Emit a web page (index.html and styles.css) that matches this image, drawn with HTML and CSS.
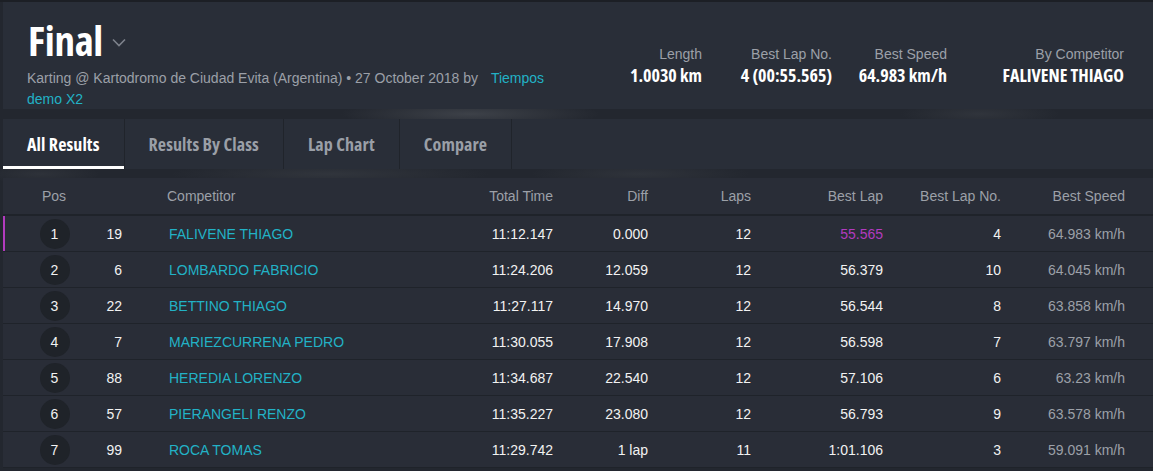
FILE: index.html
```html
<!DOCTYPE html>
<html lang="en">
<head>
<meta charset="utf-8">
<title>Final - Results</title>
<link rel="stylesheet" href="styles.css">
</head>
<body>
<div class="page">
  <header class="session">
    <div class="session-main">
      <h1 class="title">Final <svg class="chev" width="14" height="9" viewBox="0 0 14 9"><polyline points="1,1.5 7,7.5 13,1.5" fill="none" stroke="#7d828b" stroke-width="1.6"/></svg></h1>
      <p class="subtitle">Karting @ Kartodromo de Ciudad Evita (Argentina) • 27 October 2018 by <a class="org" href="#">Tiempos demo X2</a></p>
    </div>
    <div class="stats">
      <div class="stat s1"><div class="stat-label">Length</div><div class="stat-value">1.0030 km</div></div>
      <div class="stat s2"><div class="stat-label">Best Lap No.</div><div class="stat-value">4 (00:55.565)</div></div>
      <div class="stat s3"><div class="stat-label">Best Speed</div><div class="stat-value">64.983 km/h</div></div>
      <div class="stat s4"><div class="stat-label">By Competitor</div><div class="stat-value">FALIVENE THIAGO</div></div>
    </div>
  </header>

  <nav class="tabs">
    <a class="tab active" href="#">All Results</a>
    <a class="tab" href="#">Results By Class</a>
    <a class="tab" href="#">Lap Chart</a>
    <a class="tab" href="#">Compare</a>
  </nav>

  <div class="results">
    <div class="row head">
      <div class="center">Pos</div><div></div><div class="left">Competitor</div><div>Total Time</div><div>Diff</div><div>Laps</div><div>Best Lap</div><div>Best Lap No.</div><div>Best Speed</div>
    </div>
    <div class="row leader">
      <div class="center"><span class="pos">1</span></div><div>19</div><div class="left"><a class="name" href="#">FALIVENE THIAGO</a></div><div>11:12.147</div><div>0.000</div><div>12</div><div class="fastest">55.565</div><div>4</div><div class="speed">64.983 km/h</div>
    </div>
    <div class="row">
      <div class="center"><span class="pos">2</span></div><div>6</div><div class="left"><a class="name" href="#">LOMBARDO FABRICIO</a></div><div>11:24.206</div><div>12.059</div><div>12</div><div>56.379</div><div>10</div><div class="speed">64.045 km/h</div>
    </div>
    <div class="row">
      <div class="center"><span class="pos">3</span></div><div>22</div><div class="left"><a class="name" href="#">BETTINO THIAGO</a></div><div>11:27.117</div><div>14.970</div><div>12</div><div>56.544</div><div>8</div><div class="speed">63.858 km/h</div>
    </div>
    <div class="row">
      <div class="center"><span class="pos">4</span></div><div>7</div><div class="left"><a class="name" href="#">MARIEZCURRENA PEDRO</a></div><div>11:30.055</div><div>17.908</div><div>12</div><div>56.598</div><div>7</div><div class="speed">63.797 km/h</div>
    </div>
    <div class="row">
      <div class="center"><span class="pos">5</span></div><div>88</div><div class="left"><a class="name" href="#">HEREDIA LORENZO</a></div><div>11:34.687</div><div>22.540</div><div>12</div><div>57.106</div><div>6</div><div class="speed">63.23 km/h</div>
    </div>
    <div class="row">
      <div class="center"><span class="pos">6</span></div><div>57</div><div class="left"><a class="name" href="#">PIERANGELI RENZO</a></div><div>11:35.227</div><div>23.080</div><div>12</div><div>56.793</div><div>9</div><div class="speed">63.578 km/h</div>
    </div>
    <div class="row">
      <div class="center"><span class="pos">7</span></div><div>99</div><div class="left"><a class="name" href="#">ROCA TOMAS</a></div><div>11:29.742</div><div>1 lap</div><div>11</div><div>1:01.106</div><div>3</div><div class="speed">59.091 km/h</div>
    </div>
  </div>
</div>
</body>
</html>
```

FILE: styles.css
```css
* { box-sizing: border-box; }

html, body {
  margin: 0;
  padding: 0;
}

body {
  width: 1153px;
  height: 471px;
  overflow: hidden;
  background-color: #23272f;
  background-image:
    radial-gradient(ellipse 130px 14px at 470px 114px, rgba(110,114,120,0.35), transparent),
    radial-gradient(ellipse 80px 12px at 980px 114px, rgba(95,99,105,0.22), transparent),
    radial-gradient(ellipse 160px 12px at 330px 174px, rgba(90,94,100,0.25), transparent),
    radial-gradient(ellipse 60px 10px at 40px 174px, rgba(90,94,100,0.2), transparent),
    radial-gradient(ellipse 110px 12px at 640px 174px, rgba(90,94,100,0.22), transparent),
    linear-gradient(#1c1f25 0, #1c1f25 2px, transparent 2px);
  font-family: "Liberation Sans", Arial, sans-serif;
  color: #fff;
}

.page {
  padding: 2px 0 0 3px;
}

/* ---------- session header ---------- */
.session {
  height: 107px;
  background: #292e38;
  display: flex;
  justify-content: space-between;
  align-items: flex-start;
  padding: 17px 29px 0 24px;
}

.session-main {
  width: 530px;
}

.title {
  margin: 0;
  font-family: "Open Sans", "Liberation Sans Narrow", sans-serif;
  font-stretch: 75%;
  font-weight: 700;
  font-size: 41px;
  line-height: 42px;
  letter-spacing: -0.3px;
  display: flex;
  align-items: center;
  gap: 9px;
  padding-left: 1px;
}

.chev {
  display: block;
  margin-top: 4px;
}

.subtitle {
  margin: 7px 0 0;
  font-size: 14px;
  line-height: 21px;
  color: #9ca0a8;
}

.org {
  color: #22b2c6;
  text-decoration: none;
  margin-left: 9px;
}

.stats {
  display: flex;
  margin-top: 26px;
}

.stat {
  text-align: right;
}

.s1 { width: 100px; }
.s2 { width: 130px; }
.s3 { width: 115px; }
.s4 { width: 177px; }

.stat-label {
  font-size: 14px;
  line-height: 18px;
  color: #9ca0a8;
}

.stat-value {
  font-family: "Open Sans", "Liberation Sans Narrow", sans-serif;
  font-stretch: 75%;
  font-weight: 700;
  font-size: 18px;
  line-height: 25px;
  color: #fff;
}

/* ---------- tabs ---------- */
.tabs {
  margin-top: 10px;
  height: 50px;
  background: #292e38;
  display: flex;
}

.tab {
  display: flex;
  align-items: center;
  padding: 0 24px;
  height: 50px;
  border-right: 1px solid #20242b;
  font-family: "Open Sans", "Liberation Sans Narrow", sans-serif;
  font-stretch: 75%;
  font-weight: 700;
  font-size: 18px;
  letter-spacing: 0.1px;
  color: #9a9fa7;
  text-decoration: none;
}

.tab.active {
  color: #fff;
  box-shadow: inset 0 -3px 0 #ffffff;
}

/* ---------- results table ---------- */
.results {
  margin-top: 9px;
  width: 1150px;
  background: #292d37;
  font-size: 14px;
}

.row {
  display: grid;
  grid-template-columns: 102px 17px 358px 73px 95px 103px 132px 118px 124px;
  align-items: center;
  height: 36px;
  border-bottom: 1px solid #1f232a;
  color: #f2f2f2;
}

.row > div {
  text-align: right;
  white-space: nowrap;
}

.row.head {
  height: 38px;
  border-bottom: 2px solid #1f232a;
  color: #9ca0a8;
}

.row .center { text-align: center; }
.row .left { text-align: left; padding-left: 47px; }
.row.head .left { padding-left: 45px; }

.leader {
  box-shadow: inset 2px 0 0 #b23bbf;
}

.pos {
  display: inline-flex;
  align-items: center;
  justify-content: center;
  width: 30px;
  height: 30px;
  border-radius: 50%;
  background: #1f2329;
  color: #f2f2f2;
  vertical-align: middle;
  margin-left: 1px;
}

.name {
  color: #22b2c6;
  text-decoration: none;
}

.fastest { color: #b23bbf; }
.speed { color: #9ca0a8; }
```
